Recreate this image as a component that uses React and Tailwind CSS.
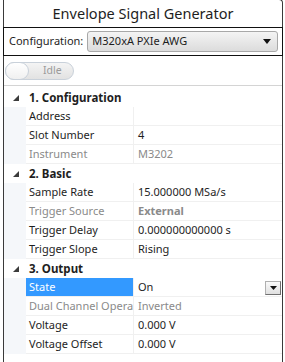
import React from "react";

const F = { fontFamily: '"Segoe UI", "Noto Sans", "Open Sans", sans-serif' };

function Tri() {
  return (
    <svg width="6" height="6" viewBox="0 0 6 6" className="block">
      <polygon points="6,0 6,6 0,6" fill="#3c3c3c" />
    </svg>
  );
}

function Header({ label }) {
  return (
    <div className="flex h-[19px] items-center bg-white">
      <div className="w-[22px] flex justify-center pl-[1px]"><Tri /></div>
      <div className="pl-[3px] text-[11.5px] font-bold text-[#1e1e1e]">{label}</div>
    </div>
  );
}

function Row({ name, value, dim, boldVal, selected, dropdown }) {
  return (
    <div className="flex h-[19px]">
      <div className="w-[22px] bg-[#f5f7fa]" />
      <div
        className={
          "w-[108px] h-[19px] border-b border-r border-[#f0f0f0] pl-[3px] text-[11px] leading-[18px] whitespace-nowrap overflow-hidden " +
          (selected ? "bg-[#3399ff] text-white" : dim ? "text-[#8a8a8a]" : "text-[#1e1e1e]")
        }
      >
        {name}
      </div>
      <div className="flex-1 h-[19px] border-b border-[#f0f0f0] pl-[4px] flex items-center text-[11px] leading-[18px] relative">
        <span className={(dim ? "text-[#8a8a8a] " : "text-[#1e1e1e] ") + (boldVal ? "font-bold" : "")}>{value}</span>
        {dropdown && (
          <div className="absolute right-[1px] top-[3px] w-[16px] h-[14px] border border-[#b0b0b0] border-r-[#707070] border-b-[#707070] bg-gradient-to-b from-[#fafafa] to-[#e0e0e0] flex items-center justify-center">
            <svg width="7" height="4" viewBox="0 0 7 4"><polygon points="0,0 7,0 3.5,4" fill="#111" /></svg>
          </div>
        )}
      </div>
    </div>
  );
}

export default function App() {
  return (
    <div className="w-[285px] h-[362px] bg-white overflow-hidden" style={F}>
      <div className="ml-[3px] mt-[-1px] w-[280px] h-[364px] border-l border-r border-t border-[#3a3a3a] rounded-tr-[4px] flex flex-col">
        <div className="h-[27px] flex items-center justify-center text-[14.5px] text-[#1e1e1e] pt-[1px]">
          Envelope Signal Generator
        </div>
        <div className="ml-[-1px] mr-[-1px] h-[29px] border border-[#111] flex items-center">
          <span className="ml-[5px] text-[11px] text-[#1e1e1e]">Configuration:</span>
          <div className="ml-[4px] mr-[4px] flex-1 h-[21px] rounded-[3px] border border-[#a8a8a8] bg-gradient-to-b from-[#f4f4f4] to-[#dcdcdc] flex items-center justify-between pl-[4px] pr-[6px]">
            <span className="text-[11px] text-[#1e1e1e]">M320xA PXIe AWG</span>
            <svg width="8" height="5" viewBox="0 0 8 5"><polygon points="0,0 8,0 4,5" fill="#111" /></svg>
          </div>
        </div>
        <div className="h-[29px] flex items-center pl-[1px]">
          <div className="relative w-[69px] h-[18px] rounded-full border border-[#c9d1da] bg-gradient-to-b from-[#f4f4f4] to-[#e2e2e2] flex items-center">
            <div className="absolute left-[-1px] top-[-1px] w-[24px] h-[18px] rounded-full border border-[#c9d1da] bg-gradient-to-b from-white to-[#f0f0f0]" />
            <span className="ml-[37px] text-[10.5px] text-[#9a9a9a]">Idle</span>
          </div>
        </div>
        <div className="border-t border-[#d4d4d4] pt-[2px] flex flex-col">
          <Header label="1. Configuration" />
          <Row name="Address" value="" />
          <Row name="Slot Number" value="4" />
          <Row name="Instrument" value="M3202" dim />
          <Header label="2. Basic" />
          <Row name="Sample Rate" value="15.000000 MSa/s" />
          <Row name="Trigger Source" value="External" dim boldVal />
          <Row name="Trigger Delay" value="0.000000000000 s" />
          <Row name="Trigger Slope" value="Rising" />
          <Header label="3. Output" />
          <Row name="State" value="On" selected dropdown />
          <Row name="Dual Channel Opera" value="Inverted" dim />
          <Row name="Voltage" value="0.000 V" />
          <Row name="Voltage Offset" value="0.000 V" />
        </div>
      </div>
    </div>
  );
}
